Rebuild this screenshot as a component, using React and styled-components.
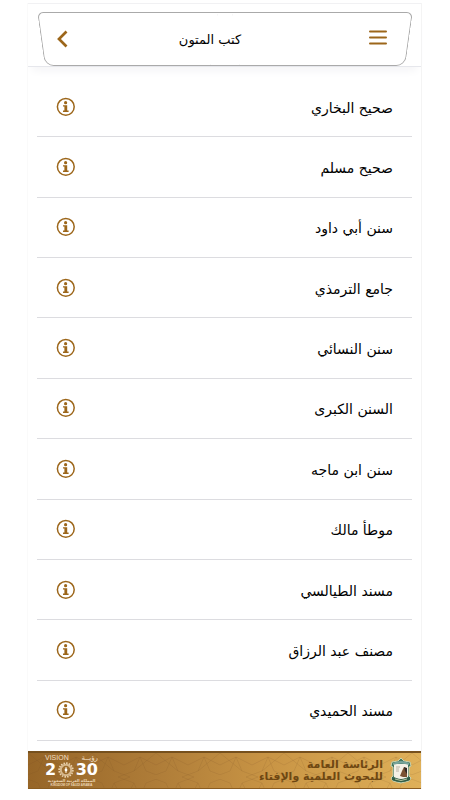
import React from 'react';
import styled, { createGlobalStyle } from 'styled-components';

const BROWN = '#9c661a';

const books = [
  'صحيح البخاري',
  'صحيح مسلم',
  'سنن أبي داود',
  'جامع الترمذي',
  'سنن النسائي',
  'السنن الكبرى',
  'سنن ابن ماجه',
  'موطأ مالك',
  'مسند الطيالسي',
  'مصنف عبد الرزاق',
  'مسند الحميدي',
];

const GlobalStyle = createGlobalStyle`
  * { box-sizing: border-box; }
  body {
    margin: 0;
    background: #fff;
    color: #000;
    font-family: "DejaVu Sans", sans-serif;
  }
`;

const Page = styled.div`
  display: flex;
  flex-direction: column;
  min-height: 100vh;
  padding: 3px 29px 11px 28px;
`;

const Screen = styled.div`
  display: flex;
  flex: 1;
  flex-direction: column;
  border-top: 1px solid #f1f1f3;
  box-shadow: -1px 0 #fafafa, 1px 0 #f4f4f4;
`;

const Header = styled.header`
  padding: 8px 9px 0 10px;
  border-bottom: 1px solid #e6e7ec;
  box-shadow: 0 8px 8px -4px #f5f5f7;
`;

const TitleBar = styled.div`
  position: relative;
  display: grid;
  grid-template-columns: 48px 1fr 68px;
  align-items: center;
  height: 54px;

  &::before,
  &::after {
    content: "";
    position: absolute;
    top: 0;
    bottom: 0;
    width: 52%;
    border: 1px solid #aaa;
    pointer-events: none;
  }
  &::before {
    left: 3px;
    border-right: 0;
    border-radius: 6px 0 0 9px;
    transform: skewX(8deg);
  }
  &::after {
    right: 3px;
    border-left: 0;
    border-radius: 0 6px 9px 0;
    transform: skewX(-8deg);
  }
`;

const IconButton = styled.button`
  display: grid;
  place-items: center;
  justify-self: center;
  padding: 4px;
  border: 0;
  background: none;
  color: ${BROWN};
  cursor: pointer;

  svg { display: block; }
`;

const Title = styled.h1`
  margin: 0;
  padding: 2px 10px 0 0;
  text-align: center;
  font-size: 13px;
  font-weight: 400;
  line-height: 20px;
`;

const BookList = styled.ul`
  display: grid;
  flex: 1;
  grid-auto-rows: 1fr;
  margin: 10px 9px;
  padding: 0;
  list-style: none;
`;

const BookRow = styled.li`
  display: flex;
  align-items: center;
  justify-content: space-between;
  padding: 0 19px 0 15px;
  border-bottom: 1px solid #dcdce0;
`;

const BookLink = styled.a`
  padding-top: 2px;
  color: inherit;
  font-size: 14px;
  line-height: 24px;
  text-decoration: none;
`;

const Footer = styled.footer`
  display: flex;
  position: relative;
  align-items: center;
  justify-content: space-between;
  height: 38px;
  padding: 0 8px 0 17px;
  border-top: 2px solid #76501d;
  border-bottom: 1px solid #8a5c20;
  background: linear-gradient(90deg, #966527, #ae7c38 32%, #c99545 62%, #dfb059);
`;

const Pattern = styled.svg`
  position: absolute;
  inset: 0;
  width: 100%;
  height: 100%;
`;

const Vision = styled.div`
  position: relative;
  width: 53px;
  color: #fff;
  font-family: "Liberation Sans", "DejaVu Sans", sans-serif;
`;

const VisionTop = styled.div`
  display: flex;
  justify-content: space-between;
  color: #f1dfc4;
  font-size: 7px;
  line-height: 8px;
  white-space: nowrap;
`;

const VisionYear = styled.div`
  display: flex;
  align-items: center;
  justify-content: space-between;
  font-family: "DejaVu Sans", sans-serif;
  font-size: 16px;
  font-weight: 700;
  line-height: 15px;
`;

const VisionCaption = styled.div`
  color: #ecd6b5;
  font-size: ${(p) => p.$size}px;
  font-weight: 700;
  line-height: 5px;
  text-align: center;
  white-space: nowrap;
`;

const Agency = styled.div`
  display: flex;
  position: relative;
  align-items: center;
  gap: 6px;
`;

const AgencyName = styled.p`
  margin: 0;
  color: #6e4712;
  font-size: 11px;
  font-weight: 700;
  line-height: 12px;
`;

const InfoIcon = () => (
  <svg width="20" height="20" viewBox="0 0 20 20" aria-hidden="true">
    <circle cx="9.8" cy="9.8" r="8.4" fill="none" stroke="currentColor" strokeWidth="1.5" />
    <circle cx="9.6" cy="5.7" r="1.6" fill="currentColor" />
    <path d="M7 8.2H11.2V13.6H12.6V15H7V13.6H8.4V9.6H7Z" fill="currentColor" />
  </svg>
);

const BackIcon = () => (
  <svg width="12" height="18" viewBox="0 0 12 18" aria-hidden="true">
    <path d="M10.5 1.5 3 9 10.5 16.5" fill="none" stroke="currentColor" strokeWidth="2.7" />
  </svg>
);

const MenuIcon = () => (
  <svg width="18" height="18" viewBox="0 0 18 18" aria-hidden="true">
    <path d="M1 1.5H17M1 7.5H17M1 13.5H17" stroke="currentColor" strokeWidth="2" strokeLinecap="round" />
  </svg>
);

const SunIcon = () => (
  <svg width="16" height="16" viewBox="0 0 16 16" aria-hidden="true">
    <g fill="none" stroke="#ead2ae">
      <circle cx="8" cy="8" r="5.2" strokeWidth="2" opacity=".75" />
      <circle cx="8" cy="8" r="6.9" strokeWidth="1.6" strokeDasharray="1.6 1.1" />
      <path d="M8 5V7M8 9V11" strokeWidth="1.4" />
    </g>
    <circle cx="8" cy="8" r="1.4" fill="#fff" />
  </svg>
);

const Emblem = () => (
  <svg width="24" height="27" viewBox="0 0 24 27" aria-hidden="true">
    <path d="M12 1 15 4 21 5 22 9 20 10V19L22 21 20 24 12 26 4 24 2 21 4 19V10L2 9 3 5 9 4Z" fill="#42765e" stroke="#c8d3b1" />
    <path d="M5 7H19V20L12 23 5 20Z" fill="#f5f1e5" />
    <path d="M4 6Q12 2 20 6V8Q12 5 4 8Z" fill="#78a49a" />
    <path d="M11 19 13 14 15 10 18 12V20L14 20Z" fill="#7a5233" />
    <path d="M15 10 18 11V17L16 14Z" fill="#2f2925" />
    <path d="M7 10H11M7 12H10M7 14H10" stroke="#b9b2a5" />
    <path d="M3 20Q12 24 21 20V23Q12 27 3 23Z" fill="#315d46" />
    <path d="M6 22Q12 25 18 22" fill="none" stroke="#dce0b8" strokeWidth=".8" />
  </svg>
);

const FooterPattern = () => (
  <Pattern aria-hidden="true">
    <defs>
      <pattern id="girih" width="64" height="48" patternUnits="userSpaceOnUse">
        <path
          d="M0 12 16 4 32 12 48 4 64 12M0 36 16 44 32 36 48 44 64 36M16 4 22 18 38 24 22 30 16 44 10 30-6 24 10 18ZM48 4 54 18 70 24 54 30 48 44 42 30 26 24 42 18ZM0 0 22 18M64 0 42 18M22 30 32 48 42 30"
          fill="none"
          stroke="#6e4516"
          opacity=".12"
        />
      </pattern>
    </defs>
    <rect width="100%" height="100%" fill="url(#girih)" />
  </Pattern>
);

export default function App() {
  return (
    <Page>
      <GlobalStyle />
      <Screen>
        <Header>
          <TitleBar>
            <IconButton type="button" aria-label="رجوع"><BackIcon /></IconButton>
            <Title lang="ar" dir="rtl">كتب المتون</Title>
            <IconButton type="button" aria-label="القائمة"><MenuIcon /></IconButton>
          </TitleBar>
        </Header>
        <BookList>
          {books.map((book) => (
            <BookRow key={book}>
              <IconButton type="button" aria-label={`معلومات عن ${book}`}><InfoIcon /></IconButton>
              <BookLink href="#" lang="ar" dir="rtl">{book}</BookLink>
            </BookRow>
          ))}
        </BookList>
        <Footer>
          <FooterPattern />
          <Vision>
            <VisionTop><span>VISION</span><span lang="ar" dir="rtl">رؤيــة</span></VisionTop>
            <VisionYear><span>2</span><SunIcon /><span>30</span></VisionYear>
            <VisionCaption $size={4} lang="ar" dir="rtl">المملكة العربية السعودية</VisionCaption>
            <VisionCaption $size={3}>KINGDOM OF SAUDI ARABIA</VisionCaption>
          </Vision>
          <Agency>
            <AgencyName lang="ar" dir="rtl">الرئاسة العامة<br />للبحوث العلمية والإفتاء</AgencyName>
            <Emblem />
          </Agency>
        </Footer>
      </Screen>
    </Page>
  );
}
